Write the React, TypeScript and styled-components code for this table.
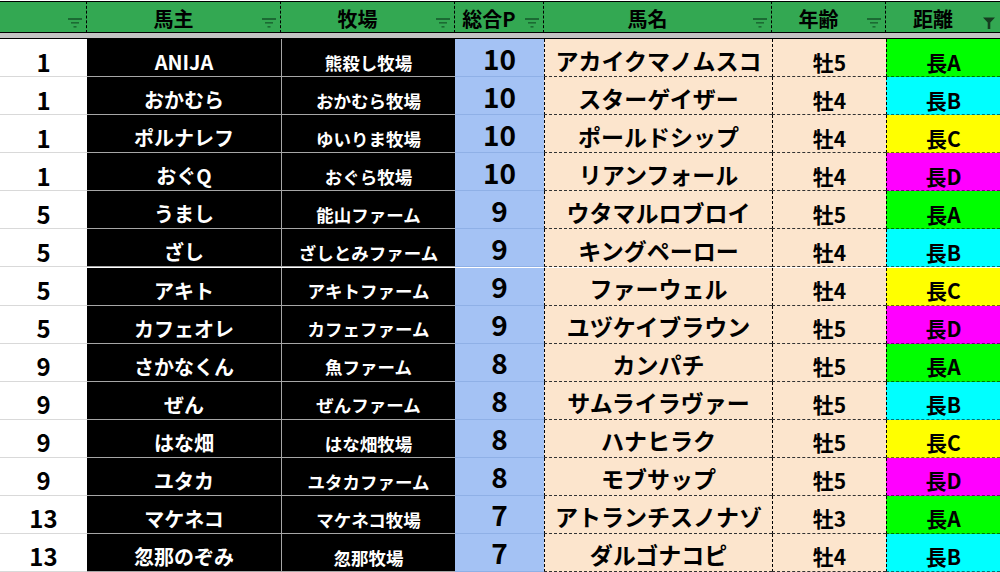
import React from 'react';
import styled, { createGlobalStyle } from 'styled-components';

const GlobalStyle = createGlobalStyle`
  html, body {
    margin: 0;
    padding: 0;
    background: #ffffff;
  }
  body {
    font-family: "Noto Sans CJK JP", "Noto Sans", sans-serif;
  }
`;

const Sheet = styled.div`
  display: grid;
  grid-template-columns: 87px 194px 174px 89px 228px 114px 114px;
  width: 1000px;
  height: 572px;
  overflow: hidden;
`;

const HeaderCell = styled.div<{ $last?: boolean }>`
  position: relative;
  box-sizing: border-box;
  height: 32px;
  margin-top: 1px;
  padding: 3px 20px 0 0;
  display: flex;
  align-items: center;
  justify-content: center;
  background: #33a852;
  border-top: 1px solid #000;
  border-bottom: 1px solid #000;
  border-right: ${(p) => (p.$last ? 'none' : '1px dashed #000')};
  color: #000;
  font-size: 20px;
  font-weight: 700;
  line-height: 1;
  white-space: nowrap;
`;

const FilterButton = styled.span`
  position: absolute;
  right: 4px;
  top: 15px;
  width: 14px;
  height: 12px;
  display: flex;
  align-items: center;
  justify-content: center;
`;

const Band = styled.div`
  grid-column: 1 / -1;
  box-sizing: border-box;
  height: 6px;
  background: #c3c3c3;
  border-bottom: 1px solid #000;
`;

const Cell = styled.div`
  box-sizing: border-box;
  height: 38px;
  display: flex;
  align-items: center;
  justify-content: center;
  line-height: 1;
  white-space: nowrap;
  font-weight: 700;
  color: #000;
`;

const RankCell = styled(Cell)`
  background: #ffffff;
  border-bottom: 1px solid #d9d9d9;
  padding-top: 8px;
  font-size: 24px;
`;

const OwnerCell = styled(Cell)`
  background: #000;
  color: #fff;
  border-bottom: 1px solid #a6a6a6;
  padding-top: 9px;
  font-size: 20px;
`;

const FarmCell = styled(Cell)`
  background: #000;
  color: #fff;
  border-left: 1px solid #a6a6a6;
  border-bottom: 1px solid #a6a6a6;
  padding-top: 10px;
  font-size: 17.5px;
`;

const PointCell = styled(Cell)`
  background: #a4c2f4;
  border-bottom: 1px solid #8fb0e6;
  font-size: 28px;
`;

const HorseCell = styled(Cell)`
  background: #fce5cd;
  border-left: 1px dashed #000;
  border-bottom: 1px dashed #333;
  padding-top: 5px;
  font-size: 23px;
  font-weight: 700;
`;

const AgeCell = styled(Cell)`
  background: #fce5cd;
  border-left: 1px dashed #000;
  border-bottom: 1px dashed #333;
  padding-top: 9px;
  font-size: 21px;
`;

const DistCell = styled(Cell)<{ $bg: string }>`
  background: ${(p) => p.$bg};
  border-left: 1px dashed #000;
  border-bottom: 1px dashed rgba(0, 0, 0, 0.55);
  padding-top: 9px;
  font-size: 21px;
`;

const FilterIcon = ({ active }: { active?: boolean }) =>
  active ? (
    <svg width="12" height="12" viewBox="0 0 12 12">
      <path d="M0 0.5 H12 L7.3 5.5 V12 H4.7 V5.5 Z" fill="#163d20" />
    </svg>
  ) : (
    <svg width="14" height="10" viewBox="0 0 14 10">
      <rect x="0" y="0" width="14" height="2" fill="#1b6a33" />
      <rect x="3" y="4" width="8" height="1.6" fill="#1b6a33" />
      <rect x="5.5" y="8" width="3" height="1.6" fill="#1b6a33" />
    </svg>
  );

const distColors: Record<string, string> = {
  A: '#00ff00',
  B: '#00ffff',
  C: '#ffff00',
  D: '#ff00ff',
};

const headers = ['', '馬主', '牧場', '総合P', '馬名', '年齢', '距離'];

const rows = [
  [1, 'ANIJA', '熊殺し牧場', 10, 'アカイクマノムスコ', '牡5', 'A'],
  [1, 'おかむら', 'おかむら牧場', 10, 'スターゲイザー', '牡4', 'B'],
  [1, 'ポルナレフ', 'ゆいりま牧場', 10, 'ポールドシップ', '牡4', 'C'],
  [1, 'おぐQ', 'おぐら牧場', 10, 'リアンフォール', '牡4', 'D'],
  [5, 'うまし', '能山ファーム', 9, 'ウタマルロブロイ', '牡5', 'A'],
  [5, 'ざし', 'ざしとみファーム', 9, 'キングペーロー', '牡4', 'B'],
  [5, 'アキト', 'アキトファーム', 9, 'ファーウェル', '牡4', 'C'],
  [5, 'カフェオレ', 'カフェファーム', 9, 'ユヅケイブラウン', '牡5', 'D'],
  [9, 'さかなくん', '魚ファーム', 8, 'カンパチ', '牡5', 'A'],
  [9, 'ぜん', 'ぜんファーム', 8, 'サムライラヴァー', '牡5', 'B'],
  [9, 'はな畑', 'はな畑牧場', 8, 'ハナヒラク', '牡5', 'C'],
  [9, 'ユタカ', 'ユタカファーム', 8, 'モブサップ', '牡5', 'D'],
  [13, 'マケネコ', 'マケネコ牧場', 7, 'アトランチスノナゾ', '牡3', 'A'],
  [13, '忽那のぞみ', '忽那牧場', 7, 'ダルゴナコピ', '牡4', 'B'],
] as const;

export default function App() {
  return (
    <>
      <GlobalStyle />
      <Sheet>
        {headers.map((h, i) => (
          <HeaderCell key={i} $last={i === headers.length - 1}>
            {h}
            <FilterButton>
              <FilterIcon active={i === headers.length - 1} />
            </FilterButton>
          </HeaderCell>
        ))}
        <Band />
        {rows.map(([rank, owner, farm, pts, horse, age, dist], i) => (
          <React.Fragment key={i}>
            <RankCell>{rank}</RankCell>
            <OwnerCell>{owner}</OwnerCell>
            <FarmCell>{farm}</FarmCell>
            <PointCell>{pts}</PointCell>
            <HorseCell>{horse}</HorseCell>
            <AgeCell>{age}</AgeCell>
            <DistCell $bg={distColors[dist]}>長{dist}</DistCell>
          </React.Fragment>
        ))}
      </Sheet>
    </>
  );
}
